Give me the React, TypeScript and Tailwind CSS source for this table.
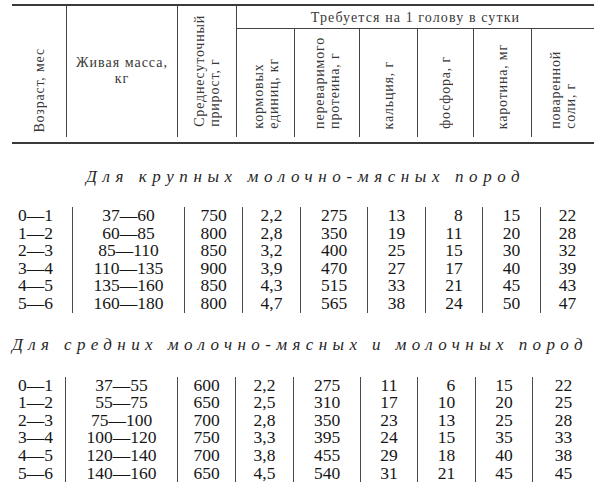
import React from "react";

const s1 = [
  ["0—1", "1—2", "2—3", "3—4", "4—5", "5—6"],
  ["37—60", "60—85", "85—110", "110—135", "135—160", "160—180"],
  ["750", "800", "850", "900", "850", "800"],
  ["2,2", "2,8", "3,2", "3,9", "4,3", "4,7"],
  ["275", "350", "400", "470", "515", "565"],
  ["13", "19", "25", "27", "33", "38"],
  ["8", "11", "15", "17", "21", "24"],
  ["15", "20", "30", "40", "45", "50"],
  ["22", "28", "32", "39", "43", "47"],
];

const s2 = [
  ["0—1", "1—2", "2—3", "3—4", "4—5", "5—6"],
  ["37—55", "55—75", "75—100", "100—120", "120—140", "140—160"],
  ["600", "650", "700", "750", "700", "650"],
  ["2,2", "2,5", "2,8", "3,3", "3,8", "4,5"],
  ["275", "310", "350", "395", "455", "540"],
  ["11", "17", "23", "24", "29", "31"],
  ["6", "10", "13", "15", "18", "21"],
  ["15", "20", "25", "35", "40", "45"],
  ["22", "25", "28", "33", "38", "45"],
];

function V({ children, pb = "pb-[8px]" }: { children: React.ReactNode; pb?: string }) {
  return (
    <div className={`flex h-full items-end justify-center ${pb}`}>
      <div className="[writing-mode:vertical-rl] rotate-180 text-[14px] leading-[15px] tracking-[0.8px] whitespace-nowrap">
        {children}
      </div>
    </div>
  );
}

function Cell({ v }: { v: string }) {
  if (v.length === 1) {
    return (
      <div>
        <span className="invisible">0</span>
        {v}
      </div>
    );
  }
  return <div>{v}</div>;
}

function Section({ data, cols, pad }: { data: string[][]; cols: string; pad: string }) {
  return (
    <div className={`grid ${cols} text-[17.5px] leading-[17.6px] text-[#161616] ${pad}`}>
      {data.map((col, i) => (
        <div
          key={i}
          className={
            i === 0
              ? "flex flex-col items-start pl-[18px]"
              : "flex flex-col items-center border-l border-[#4a4a4a]"
          }
        >
          {col.map((v, j) => (
            <Cell key={j} v={v} />
          ))}
        </div>
      ))}
    </div>
  );
}

export default function App() {
  return (
    <div className="w-[594px] h-[500px] overflow-hidden bg-white [font-family:Liberation_Serif,serif] text-[#2a2a2a]">
      <div className="ml-[12px] mt-[4px] border-t-2 border-b-2 border-[#3a3a3a] pb-[5px]">
        <div className="grid h-[131px] grid-cols-[54px_111px_59px_58px_65px_58px_56px_58px_1fr] grid-rows-[23px_108px] text-[#383838]">
          <div className="row-span-2">
            <V pb="pb-[4px]">Возраст, мес</V>
          </div>
          <div className="row-span-2 flex items-center justify-center border-l border-[#444] pb-[2px] text-center text-[14px] leading-[16px] tracking-[1px]">
            <div>
              Живая масса,
              <br />
              кг
            </div>
          </div>
          <div className="row-span-2 border-l border-[#444]">
            <V pb="pb-[10px]">
              Среднесуточный
              <br />
              прирост, г
            </V>
          </div>
          <div className="col-span-6 flex items-center justify-center border-b border-l border-[#444] text-[14px] tracking-[1.1px]">
            Требуется на 1 голову в сутки
          </div>
          <div className="border-l border-[#444]">
            <V>
              кормовых
              <br />
              единиц, кг
            </V>
          </div>
          <div className="border-l border-[#444]">
            <V>
              переваримого
              <br />
              протеина, г
            </V>
          </div>
          <div className="border-l border-[#444]">
            <V>кальция, г</V>
          </div>
          <div className="border-l border-[#444]">
            <V>фосфора, г</V>
          </div>
          <div className="border-l border-[#444]">
            <V>каротина, мг</V>
          </div>
          <div className="border-l border-[#444]">
            <V>
              поваренной
              <br />
              соли, г
            </V>
          </div>
        </div>
      </div>

      <div className="mt-[23px] pl-[86px] whitespace-nowrap text-[17px] italic leading-[20px] tracking-[5.6px] text-[#262626]">
        Для крупных молочно-мясных пород
      </div>

      <div className="mt-[20px]">
        <Section
          data={s1}
          cols="grid-cols-[72px_112px_58px_58px_67px_58px_57px_58px_1fr]"
          pad="pb-[2px]"
        />
      </div>

      <div className="mt-[20px] pl-[12px] whitespace-nowrap text-[17px] italic leading-[20px] tracking-[5.4px] text-[#262626]">
        Для средних молочно-мясных и молочных пород
      </div>

      <div className="mt-[22px]">
        <Section
          data={s2}
          cols="grid-cols-[65px_112px_58px_58px_67px_57px_58px_57px_1fr]"
          pad="pb-[30px]"
        />
      </div>
    </div>
  );
}
